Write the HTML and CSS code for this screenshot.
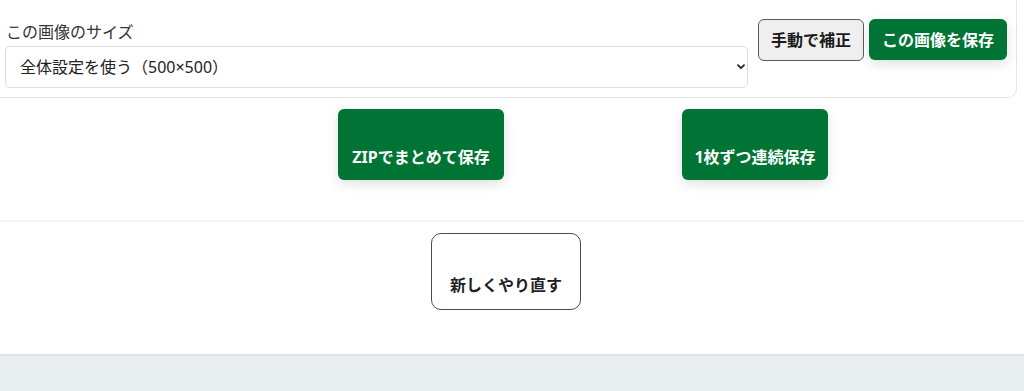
FILE: index.html
```html
<!DOCTYPE html>
<html lang="ja">
<head>
<meta charset="utf-8">
<link rel="stylesheet" href="styles.css">
</head>
<body>
<div class="card">
  <div class="size-field">
    <label class="size-label" for="size">この画像のサイズ</label>
    <div class="select-wrap">
      <select id="size" class="size-select">
        <option>全体設定を使う（500×500）</option>
      </select>
      <svg class="chev" width="8" height="6" viewBox="0 0 8 6"><path d="M1 1.2 L4 4.2 L7 1.2" fill="none" stroke="#222" stroke-width="1.8" stroke-linecap="round" stroke-linejoin="round"/></svg>
    </div>
  </div>
  <div class="card-actions">
    <button class="btn btn-gray">手動で補正</button>
    <button class="btn btn-green">この画像を保存</button>
  </div>
</div>

<div class="bulk-row">
  <button class="btn btn-green btn-tall btn-zip">ZIPでまとめて保存</button>
  <button class="btn btn-green btn-tall btn-seq">1枚ずつ連続保存</button>
</div>

<div class="restart-row">
  <button class="btn btn-outline">新しくやり直す</button>
</div>

<div class="footer"></div>
</body>
</html>
```

FILE: styles.css
```css
* { box-sizing: border-box; }
html, body { margin: 0; padding: 0; background: #ffffff; }
body {
  font-family: "Noto Sans", "Noto Sans CJK JP", sans-serif;
  color: #222;
  width: 1024px;
  height: 391px;
  overflow: hidden;
  display: flex;
  flex-direction: column;
}
.card {
  width: 1017px;
  display: flex;
  align-items: flex-start;
  gap: 10px;
  padding: 19px 9px 9px 5px;
  border-right: 1px solid #e3e6e8;
  border-bottom: 1px solid #e3e6e8;
  border-bottom-right-radius: 9px;
}
.size-field {
  flex: 1;
  display: flex;
  flex-direction: column;
  gap: 3px;
}
.size-label {
  font-family: "Noto Sans CJK JP", sans-serif;
  font-size: 16px;
  line-height: 24px;
  color: #333;
  padding-left: 1px;
}
.select-wrap { position: relative; }
.size-select {
  appearance: none;
  -webkit-appearance: none;
  width: 100%;
  height: 42px;
  border: 1px solid #dcdcdc;
  border-radius: 5px;
  background: #fff;
  font-family: "Noto Sans", "Noto Sans CJK JP", sans-serif;
  font-size: 16px;
  color: #222;
  padding: 0 14px;
}
.chev {
  position: absolute;
  right: 3px;
  top: 18px;
}
.card-actions {
  display: flex;
  gap: 5px;
}
.btn {
  font-family: "Noto Sans", "Noto Sans CJK JP", sans-serif;
  font-size: 16px;
  font-weight: 700;
  line-height: 24px;
  border-radius: 6px;
  white-space: nowrap;
  text-align: center;
  cursor: pointer;
}
.btn-gray {
  height: 42px;
  padding: 0 12px;
  background: #efefef;
  color: #1a1a1a;
  border: 1.5px solid #5a5a5a;
}
.btn-green {
  height: 41px;
  padding: 0 13px;
  background: #007434;
  color: #fff;
  border: none;
  box-shadow: 0 4px 12px rgba(0, 60, 30, 0.14);
}
.bulk-row {
  display: flex;
  gap: 178px;
  padding-left: 338px;
  margin-top: 11px;
  padding-bottom: 40px;
  border-bottom: 2px solid #f4f5f6;
}
.btn-tall {
  height: 71px;
  padding: 36px 0 11px;
}
.btn-zip { width: 166px; }
.btn-seq { width: 146px; }
.restart-row {
  display: flex;
  justify-content: center;
  padding-right: 12px;
  padding-top: 11px;
}
.btn-outline {
  height: 77px;
  padding: 39px 18px 14px;
  background: #fff;
  color: #1f1f1f;
  border: 1px solid #4a4a4a;
  border-radius: 10px;
}
.footer {
  margin-top: 44px;
  flex: 1;
  background: #e9eef1;
  border-top: 2px solid #dde3e7;
}
```
